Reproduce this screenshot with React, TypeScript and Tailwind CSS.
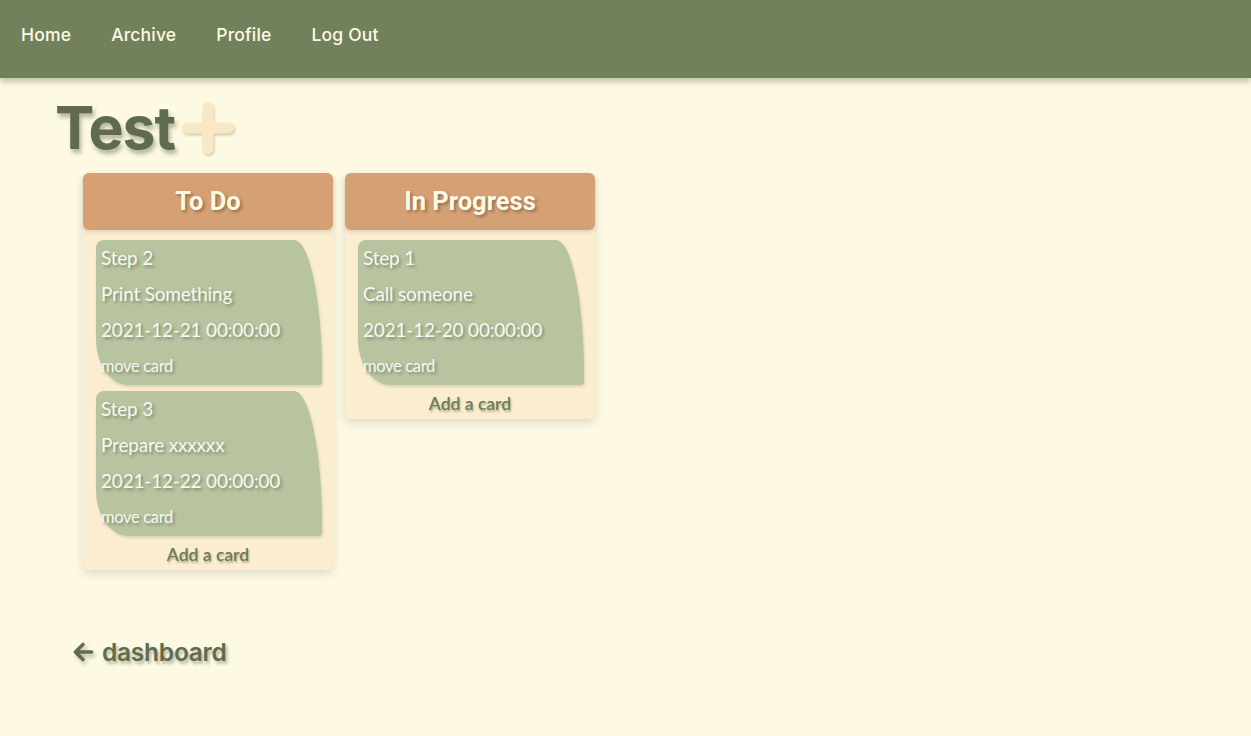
import React from "react";

type Card = { step: string; title: string; date: string };

const columns: { name: string; cards: Card[] }[] = [
  {
    name: "To Do",
    cards: [
      { step: "Step 2", title: "Print Something", date: "2021-12-21 00:00:00" },
      { step: "Step 3", title: "Prepare xxxxxx", date: "2021-12-22 00:00:00" },
    ],
  },
  {
    name: "In Progress",
    cards: [{ step: "Step 1", title: "Call someone", date: "2021-12-20 00:00:00" }],
  },
];

const soft = "[text-shadow:2px_2px_3px_rgba(60,70,40,0.45)]";

function TaskCard({ card }: { card: Card }) {
  return (
    <div className="ml-[13px] mr-[11px] bg-[#b8c3a0] pl-[5px] pb-[1px] rounded-[8px_28px_4px_32px/8px_135px_4px_46px] font-['Lato',sans-serif] text-[#f6f9f3] shadow-[1px_2px_3px_rgba(0,0,0,0.12)]">
      <div className={`text-[19px] leading-[36px] tracking-[-0.01em] ${soft}`}>{card.step}</div>
      <div className={`text-[19px] leading-[36px] tracking-[-0.01em] ${soft}`}>{card.title}</div>
      <div className={`text-[19px] leading-[36px] tracking-[-0.01em] ${soft}`}>{card.date}</div>
      <div className={`text-[16.5px] leading-[36px] tracking-[-0.02em] ${soft}`}>move card</div>
    </div>
  );
}

export default function App() {
  return (
    <div className="min-h-[736px] bg-[#fdf9e3] font-['Inter',sans-serif]">
      <nav className="h-[78px] bg-[#70815b] flex items-center pl-[1px] pb-[8px] shadow-[0_4px_6px_rgba(0,0,0,0.22)]">
        {["Home", "Archive", "Profile", "Log Out"].map((item) => (
          <a key={item} href="#" className="px-[20px] text-[17.5px] font-medium text-[#fdf9e3] tracking-[0.01em]">
            {item}
          </a>
        ))}
      </nav>

      <main className="pl-[55px] pt-[17px]">
        <div className="flex items-center gap-[6px] h-[64px]">
          <h1 className={`text-[59px] font-bold leading-none tracking-[-0.02em] text-[#5f6b4d] [text-shadow:2px_4px_4px_rgba(60,70,40,0.38)]`}>
            Test
          </h1>
          <svg viewBox="0 0 52 52" className="w-[54px] h-[54px] mt-[2px] drop-shadow-[1px_2px_1px_rgba(120,110,60,0.3)]">
            <path d="M26 6v40M6 26h40" stroke="#f8e8c6" strokeWidth="10.5" strokeLinecap="round" fill="none" />
          </svg>
        </div>

        <div className="flex items-start gap-[12px] ml-[28px] mt-[14px]">
          {columns.map((col) => (
            <div key={col.name} className="w-[250px] bg-[#fbedd0] rounded-[6px] shadow-[0_4px_10px_rgba(0,0,0,0.12)]">
              <div className="h-[57px] bg-[#d4a074] rounded-[6px] flex items-center justify-center shadow-[0_2px_4px_rgba(0,0,0,0.12)]">
                <span className={`font-['Roboto',sans-serif] font-bold text-[25.5px] text-[#fdf9e3] [text-shadow:2px_2px_3px_rgba(80,60,30,0.45)]`}>
                  {col.name}
                </span>
              </div>
              <div className="pt-[10px] flex flex-col gap-[6px]">
                {col.cards.map((c) => (
                  <TaskCard key={c.step} card={c} />
                ))}
              </div>
              <div className={`mt-[4px] h-[30px] leading-[30px] text-center font-['Lato',sans-serif] text-[17.5px] font-semibold text-[#6b7d55] [text-shadow:1px_2px_2px_rgba(60,70,40,0.35)]`}>
                Add a card
              </div>
            </div>
          ))}
        </div>

        <a href="#" className="mt-[69px] ml-[15px] flex items-center gap-[6px] w-fit text-[#5f6b4d]">
          <svg viewBox="0 0 24 24" className="w-[26px] h-[26px] drop-shadow-[2px_3px_2px_rgba(60,70,40,0.35)]">
            <path d="M20 12H5M12 5l-7 7 7 7" stroke="#5f6b4d" strokeWidth="3.2" strokeLinecap="round" strokeLinejoin="round" fill="none" />
          </svg>
          <span className="text-[24.5px] font-semibold leading-none tracking-[-0.01em] [text-shadow:2px_3px_3px_rgba(60,70,40,0.35)]">
            dashboard
          </span>
        </a>
      </main>
    </div>
  );
}
